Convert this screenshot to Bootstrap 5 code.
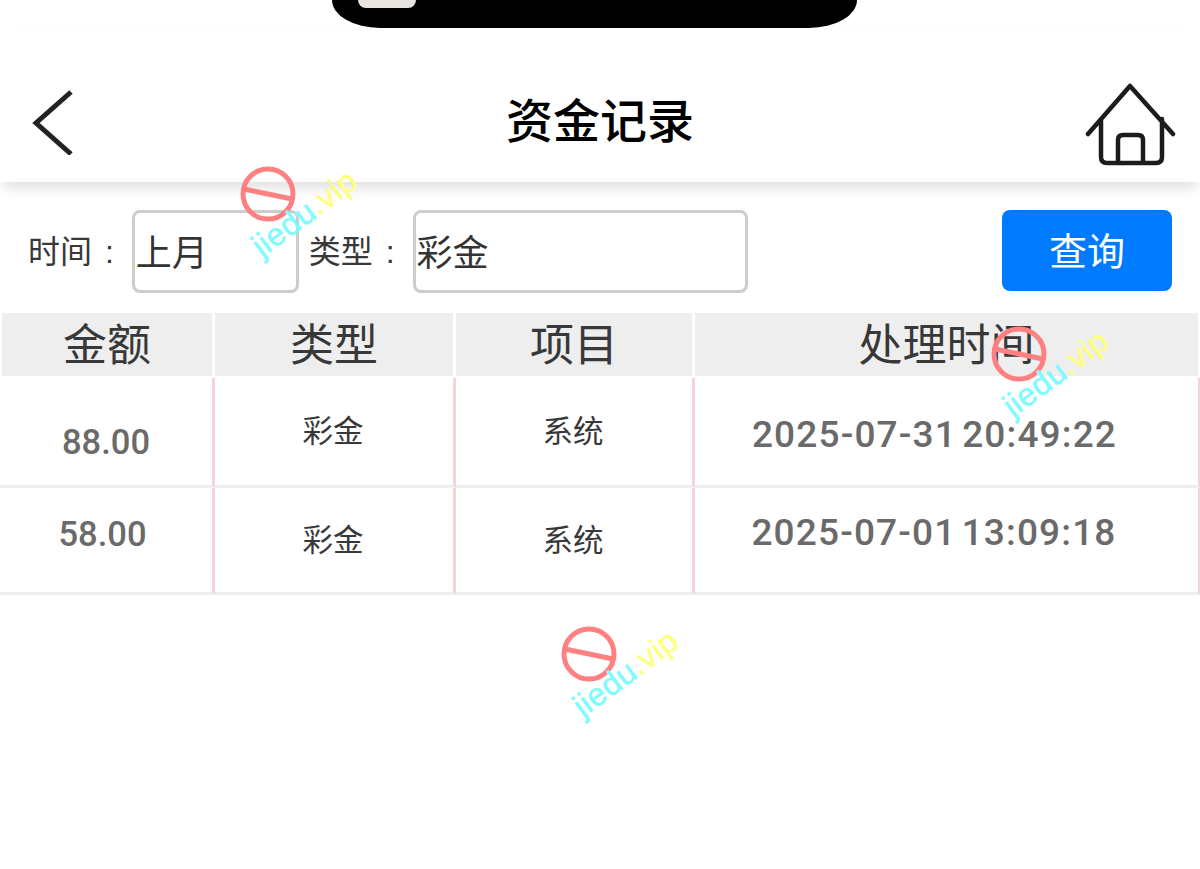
<!DOCTYPE html>
<html lang="zh-CN">
<head>
<meta charset="utf-8">
<title>资金记录</title>
<link href="https://cdn.jsdelivr.net/npm/bootstrap@5.3.0/dist/css/bootstrap.min.css" rel="stylesheet">
<style>
html,body{height:100%;}
body{position:relative;overflow:hidden;background:#fff;font-family:"Liberation Sans","Noto Sans CJK SC",sans-serif;color:#383838;}
.notch{width:525px;height:28px;margin-left:332px;background:#000;border-radius:0 0 48px 48px / 0 0 28px 28px;}
.notch-thumb{width:58px;height:8px;margin-left:26px;background:#e9e4e0;border-radius:0 0 8px 8px;}
.app-head{height:154px;padding:32px 32px 0 32px;background:#fff;box-shadow:0 8px 14px -3px rgba(0,0,0,.14);position:relative;}
.head-side{flex:1 1 0;}
.app-title{font-size:47px;font-weight:500;color:#000;line-height:1;}
.back-svg{width:42px;height:66px;margin-top:2px;}
.home-svg{width:92px;height:84px;margin:6px -9px 0 0;}
.filter-bar{height:131px;padding:28px 28px 0 28px;}
.lbl{font-size:32px;line-height:84px;white-space:nowrap;word-spacing:4px;}
.lbl-gap{margin-right:18px;}
.fake-input{height:83px;border:3px solid #ccc;border-radius:8px;font-size:36px;line-height:82px;padding-left:1px;color:#333;background:#fff;}
.w-small{width:167px;margin-right:10px;}
.w-large{width:335px;}
.query-btn{width:170px;height:81px;padding:3px 0 0;background:#007aff;border:0;border-radius:8px;color:#fff;font-size:38px;}
.rec-table{width:1200px;table-layout:fixed;border-collapse:separate;border-spacing:0;}
.rec-table th{height:65px;background:#eee;font-size:44px;font-weight:400;text-align:center;padding:3px 0 0;border-right:3px solid #fff;border-bottom:2px solid #fff;line-height:1;}
.rec-table th:first-child{border-left:2px solid #fff;}
.rec-table th:last-child{border-right-width:2px;}
.rec-table td{text-align:center;padding:0 2px 0 0;border-right:3px solid #f3d5d6;border-bottom:3px solid #eee;font-size:30.5px;line-height:1;}
.rec-table td:last-child{border-right-width:2px;}
.row-a td{height:110px;}
.row-b td{height:107px;}
.num-txt{display:inline-block;font-family:Roboto,"Liberation Sans",sans-serif;font-weight:500;color:#6a6a6a;font-size:34.5px;}
.rec-table td.amt-a{padding:22px 0 0;}
.rec-table td.amt-b{padding:0 7px 12px 0;}
.rec-table td.date-a{padding:6px 24px 0 0;}
.rec-table td.date-b{padding:0 25px 16px 0;}
.date-txt{font-size:37px;letter-spacing:1.15px;word-spacing:-5px;}
.c1{width:215px}.c2{width:241px}.c3{width:239px}.c4{width:505px}
.mark-wrap{position:absolute;width:140px;height:120px;pointer-events:none;}
.mark-one{left:230px;top:160px;}
.mark-two{left:981px;top:320px;}
.mark-three{left:551px;top:620px;}
.mark-wrap svg{display:block;width:140px;height:120px;overflow:visible;}
.mark-text{font-family:"Liberation Sans",sans-serif;font-size:32px;stroke-width:.5px;letter-spacing:.5px;}
.tone-c{fill:#7dfbff;stroke:#7dfbff;}
.tone-y{fill:#ffff80;stroke:#ffff80;}
</style>
</head>
<body>
<div class="notch"><div class="notch-thumb"></div></div>
<header class="app-head d-flex align-items-center">
  <div class="head-side d-flex">
    <svg class="back-svg" viewBox="0 0 42 66" aria-hidden="true"><path d="M39 3 4 34 39 65" fill="none" stroke="#222" stroke-width="5"/></svg>
  </div>
  <div class="app-title">资金记录</div>
  <div class="head-side d-flex justify-content-end">
    <svg class="home-svg" viewBox="0 0 92 84" aria-hidden="true"><path d="M3 52 45 4 88 52M16 37V75Q16 81 22 81H71Q77 81 77 75V37M33 81V58Q33 53 38 53H53Q58 53 58 58V81" fill="none" stroke="#1c1c1c" stroke-width="4.5" stroke-linecap="round" stroke-linejoin="round"/></svg>
  </div>
</header>
<div class="filter-bar d-flex align-items-start">
  <span class="lbl lbl-gap">时间 :</span>
  <div class="fake-input w-small">上月</div>
  <span class="lbl lbl-gap">类型 :</span>
  <div class="fake-input w-large">彩金</div>
  <button type="button" class="btn query-btn ms-auto">查询</button>
</div>
<table class="rec-table">
  <colgroup><col class="c1"><col class="c2"><col class="c3"><col class="c4"></colgroup>
  <thead><tr><th>金额</th><th>类型</th><th>项目</th><th>处理时间</th></tr></thead>
  <tbody>
    <tr class="row-a"><td class="amt-a"><span class="num-txt">88.00</span></td><td>彩金</td><td>系统</td><td class="date-a"><span class="num-txt date-txt">2025-07-31 20:49:22</span></td></tr>
    <tr class="row-b"><td class="amt-b"><span class="num-txt">58.00</span></td><td>彩金</td><td>系统</td><td class="date-b"><span class="num-txt date-txt">2025-07-01 13:09:18</span></td></tr>
  </tbody>
</table>
<div class="mark-wrap mark-one"><svg viewBox="0 0 140 120"><g fill="none" stroke="#ff8080" stroke-width="5"><ellipse cx="38" cy="34" rx="25" ry="25"/><path d="M14 29 62 39"/></g><text class="mark-text" transform="translate(32 98) rotate(-36.5)"><tspan class="tone-c">jiedu</tspan><tspan class="tone-y">.vip</tspan></text></svg></div>
<div class="mark-wrap mark-two"><svg viewBox="0 0 140 120"><g fill="none" stroke="#ff8080" stroke-width="5"><ellipse cx="38" cy="34" rx="25" ry="25"/><path d="M14 29 62 39"/></g><text class="mark-text" transform="translate(32 98) rotate(-36.5)"><tspan class="tone-c">jiedu</tspan><tspan class="tone-y">.vip</tspan></text></svg></div>
<div class="mark-wrap mark-three"><svg viewBox="0 0 140 120"><g fill="none" stroke="#ff8080" stroke-width="5"><ellipse cx="38" cy="34" rx="25" ry="25"/><path d="M14 29 62 39"/></g><text class="mark-text" transform="translate(32 98) rotate(-36.5)"><tspan class="tone-c">jiedu</tspan><tspan class="tone-y">.vip</tspan></text></svg></div>
<script src="https://cdn.jsdelivr.net/npm/bootstrap@5.3.0/dist/js/bootstrap.bundle.min.js"></script>
</body>
</html>
